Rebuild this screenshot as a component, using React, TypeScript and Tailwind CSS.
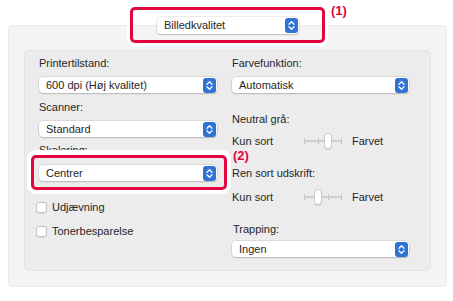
import React from "react";

const font = { fontFamily: '"Liberation Sans", Arial, sans-serif' };

function Stepper() {
  return (
    <svg width="13" height="15" viewBox="0 0 13 15" className="shrink-0">
      <rect x="0" y="0" width="13" height="15" rx="3" fill="#2f73d4" />
      <path d="M4 6.2 L6.5 3.7 L9 6.2" stroke="#fff" strokeWidth="1.3" fill="none" strokeLinecap="round" strokeLinejoin="round" />
      <path d="M4 8.8 L6.5 11.3 L9 8.8" stroke="#fff" strokeWidth="1.3" fill="none" strokeLinecap="round" strokeLinejoin="round" />
    </svg>
  );
}

function Select({ value, className = "" }: { value: string; className?: string }) {
  return (
    <div
      className={`flex h-[16px] items-center justify-between rounded-[4px] bg-white pl-[7px] pr-[1px] shadow-[0_0_0_0.5px_rgba(0,0,0,0.14),0_1px_1.5px_rgba(0,0,0,0.16)] ${className}`}
    >
      <span className="text-[11px] leading-[13px] text-[#262626]">{value}</span>
      <Stepper />
    </div>
  );
}

function Label({ children, className = "" }: { children: React.ReactNode; className?: string }) {
  return <div className={`text-[11px] leading-[13px] text-[#262626] ${className}`}>{children}</div>;
}

function Checkbox({ label, className = "" }: { label: string; className?: string }) {
  return (
    <div className={`flex h-[13px] items-center ${className}`}>
      <div className="h-[11px] w-[11px] rounded-[3px] border border-[#c4c4c4] bg-white shadow-[0_0.5px_1px_rgba(0,0,0,0.08)]" />
      <span className="ml-[5px] text-[11px] leading-[13px] text-[#262626]">{label}</span>
    </div>
  );
}

function Slider({ thumb, ticks }: { thumb: number; ticks: number[] }) {
  return (
    <div className="relative h-[18px] w-[38px]">
      <div className="absolute left-0 right-0 top-[8px] h-[2px] rounded bg-[#cfcfcf]" />
      {ticks.map((t) => (
        <div key={t} className="absolute top-[6px] h-[6px] w-[1px] bg-[#c6c6c6]" style={{ left: t }} />
      ))}
      <div
        className="absolute top-[1px] h-[16px] w-[8px] rounded-full border border-[#cdcdcd] bg-white shadow-[0_1px_1px_rgba(0,0,0,0.12)]"
        style={{ left: thumb }}
      />
    </div>
  );
}

function SliderRow({ thumb, ticks, className = "" }: { thumb: number; ticks: number[]; className?: string }) {
  return (
    <div className={`flex h-[18px] items-center ${className}`}>
      <span className="w-[72px] text-[11px] leading-[13px] text-[#262626]">Kun sort</span>
      <Slider thumb={thumb} ticks={ticks} />
      <span className="ml-[10px] text-[11px] leading-[13px] text-[#262626]">Farvet</span>
    </div>
  );
}

export default function App() {
  return (
    <div className="relative h-[301px] w-[453px] overflow-hidden bg-white" style={font}>
      <div className="pt-[17px]">
        <div className="relative z-10 ml-[157px] w-[142px]">
          <Select value="Billedkvalitet" className="h-[17px]" />
        </div>
        <div className="-mt-[9px] ml-[8px] h-[262px] w-[439px] rounded-[4px] border border-[#ebebeb] bg-[#f4f4f4] px-[15px] pt-[24px]">
          <div className="flex h-[221px] w-[407px] rounded-[5px] border border-[#e3e3e3] bg-[#ececec] pl-[14px] pt-[6px]">
            <div className="flex w-[178px] flex-col">
              <Label>Printertilstand:</Label>
              <Select value="600 dpi (Høj kvalitet)" className="mt-[7px]" />
              <Label className="mt-[8px]">Scanner:</Label>
              <Select value="Standard" className="mt-[7px]" />
              <Label className="mt-[7px]">Skalering:</Label>
              <Select value="Centrer" className="mt-[8px]" />
              <Checkbox label="Udjævning" className="-ml-[3px] mt-[20px]" />
              <Checkbox label="Tonerbesparelse" className="-ml-[3px] mt-[11px]" />
            </div>
            <div className="ml-[15px] flex w-[177px] flex-col">
              <Label>Farvefunktion:</Label>
              <Select value="Automatisk" className="mt-[7px]" />
              <Label className="mt-[20px]">Neutral grå:</Label>
              <SliderRow thumb={20} ticks={[0, 14, 37]} className="mt-[6px]" />
              <Label className="mt-[17px]">Ren sort udskrift:</Label>
              <SliderRow thumb={10} ticks={[0, 24, 37]} className="mt-[8px]" />
              <Label className="ml-[1px] mt-[17px]">Trapping:</Label>
              <Select value="Ingen" className="mt-[5px]" />
            </div>
          </div>
        </div>
      </div>

      {/* annotation (1) */}
      <div className="absolute left-[127px] top-[4px] h-[43px] w-[201px] rounded-[8px] border-[3px] border-white" />
      <div className="absolute left-[130px] top-[7px] h-[36px] w-[195px] rounded-[5px] border-[3px] border-[#e2063c]" />
      <div className="absolute left-[331px] top-[3px] text-[13px] font-bold leading-[15px] text-[#e2063c]">(1)</div>

      {/* annotation (2) */}
      <div className="absolute left-[27px] top-[150px] h-[44px] w-[204px] rounded-[9px] border-[5px] border-white" />
      <div className="absolute left-[31px] top-[155px] h-[35px] w-[196px] rounded-[5px] border-[3px] border-[#e2063c]" />
      <div className="absolute left-[233px] top-[148px] text-[13px] font-bold leading-[15px] text-[#e2063c]">(2)</div>
    </div>
  );
}
